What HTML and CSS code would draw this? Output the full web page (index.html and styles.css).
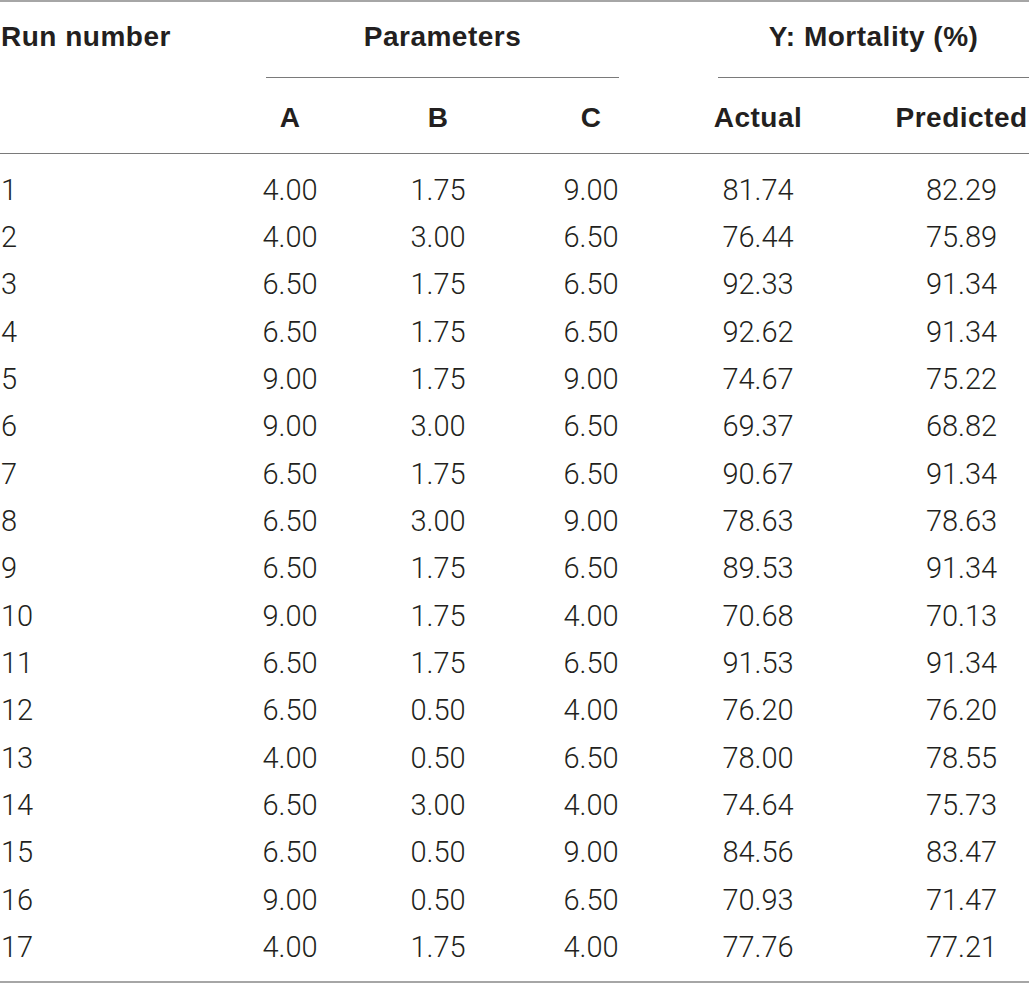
FILE: index.html
```html
<!DOCTYPE html>
<html lang="en">
<head>
    <meta charset="UTF-8">
    <title>Mortality design table</title>
    <meta name="viewport" content="width=device-width, initial-scale=1.0">
    <link rel="stylesheet" href="styles.css">
</head>
<body>
    <table class="results">
        <colgroup>
            <col class="c-run">
            <col class="c-a">
            <col class="c-b">
            <col class="c-c">
            <col class="c-actual">
            <col class="c-pred">
        </colgroup>
        <thead>
            <tr class="head-top">
                <th class="run-label">Run number</th>
                <th colspan="3" class="group"><div class="group-label params">Parameters</div></th>
                <th colspan="2" class="group"><div class="group-label mort">Y: Mortality (%)</div></th>
            </tr>
            <tr class="head-sub">
                <th></th>
                <th>A</th>
                <th>B</th>
                <th>C</th>
                <th>Actual</th>
                <th class="pred">Predicted</th>
            </tr>
        </thead>
        <tbody>
            <tr><td>1</td><td>4.00</td><td>1.75</td><td>9.00</td><td>81.74</td><td class="pred">82.29</td></tr>
            <tr><td>2</td><td>4.00</td><td>3.00</td><td>6.50</td><td>76.44</td><td class="pred">75.89</td></tr>
            <tr><td>3</td><td>6.50</td><td>1.75</td><td>6.50</td><td>92.33</td><td class="pred">91.34</td></tr>
            <tr><td>4</td><td>6.50</td><td>1.75</td><td>6.50</td><td>92.62</td><td class="pred">91.34</td></tr>
            <tr><td>5</td><td>9.00</td><td>1.75</td><td>9.00</td><td>74.67</td><td class="pred">75.22</td></tr>
            <tr><td>6</td><td>9.00</td><td>3.00</td><td>6.50</td><td>69.37</td><td class="pred">68.82</td></tr>
            <tr><td>7</td><td>6.50</td><td>1.75</td><td>6.50</td><td>90.67</td><td class="pred">91.34</td></tr>
            <tr><td>8</td><td>6.50</td><td>3.00</td><td>9.00</td><td>78.63</td><td class="pred">78.63</td></tr>
            <tr><td>9</td><td>6.50</td><td>1.75</td><td>6.50</td><td>89.53</td><td class="pred">91.34</td></tr>
            <tr><td>10</td><td>9.00</td><td>1.75</td><td>4.00</td><td>70.68</td><td class="pred">70.13</td></tr>
            <tr><td>11</td><td>6.50</td><td>1.75</td><td>6.50</td><td>91.53</td><td class="pred">91.34</td></tr>
            <tr><td>12</td><td>6.50</td><td>0.50</td><td>4.00</td><td>76.20</td><td class="pred">76.20</td></tr>
            <tr><td>13</td><td>4.00</td><td>0.50</td><td>6.50</td><td>78.00</td><td class="pred">78.55</td></tr>
            <tr><td>14</td><td>6.50</td><td>3.00</td><td>4.00</td><td>74.64</td><td class="pred">75.73</td></tr>
            <tr><td>15</td><td>6.50</td><td>0.50</td><td>9.00</td><td>84.56</td><td class="pred">83.47</td></tr>
            <tr><td>16</td><td>9.00</td><td>0.50</td><td>6.50</td><td>70.93</td><td class="pred">71.47</td></tr>
            <tr><td>17</td><td>4.00</td><td>1.75</td><td>4.00</td><td>77.76</td><td class="pred">77.21</td></tr>
        </tbody>
    </table>
</body>
</html>
```

FILE: styles.css
```css
body {
    margin: 0;
    background: #fff;
    color: #231f20;
    overflow: hidden;
}

.results {
    width: 1029px;
    table-layout: fixed;
    border-collapse: separate;
    border-spacing: 0;
    border-top: 2px solid #a6a6a6;
    border-bottom: 2px solid #a6a6a6;
    font-size: 28px;
}

.c-run { width: 230px; }
.c-a { width: 120px; }
.c-b { width: 176px; }
.c-c { width: 130px; }
.c-actual { width: 204px; }
.c-pred { width: 169px; }

th {
    font-family: "Liberation Sans", Arial, sans-serif;
    font-weight: bold;
    letter-spacing: 0.5px;
    text-align: center;
    padding: 0;
    white-space: nowrap;
}

.head-top th {
    vertical-align: top;
}

.run-label {
    text-align: left !important;
    line-height: 70px;
    padding: 0 0 6px 1px !important;
}

.group-label {
    line-height: 70px;
    padding-bottom: 5px;
    border-bottom: 1px solid #7a7a7a;
}

.params {
    margin: 0 37px 0 36px;
}

.mort {
    margin: 0 0 0 62px;
}

.head-sub th {
    line-height: 71px;
    padding-top: 4px;
    border-bottom: 1px solid #7a7a7a;
}

td {
    font-family: Roboto, "Liberation Sans", sans-serif;
    font-weight: 300;
    font-size: 29px;
    text-align: center;
    line-height: 47.35px;
    padding: 0;
    white-space: nowrap;
}

td:first-child {
    text-align: left;
    padding-left: 1px;
}

.pred {
    padding-left: 34px;
}

tbody tr:first-child td {
    padding-top: 12.5px;
}

tbody tr:last-child td {
    padding-bottom: 10px;
}
```
